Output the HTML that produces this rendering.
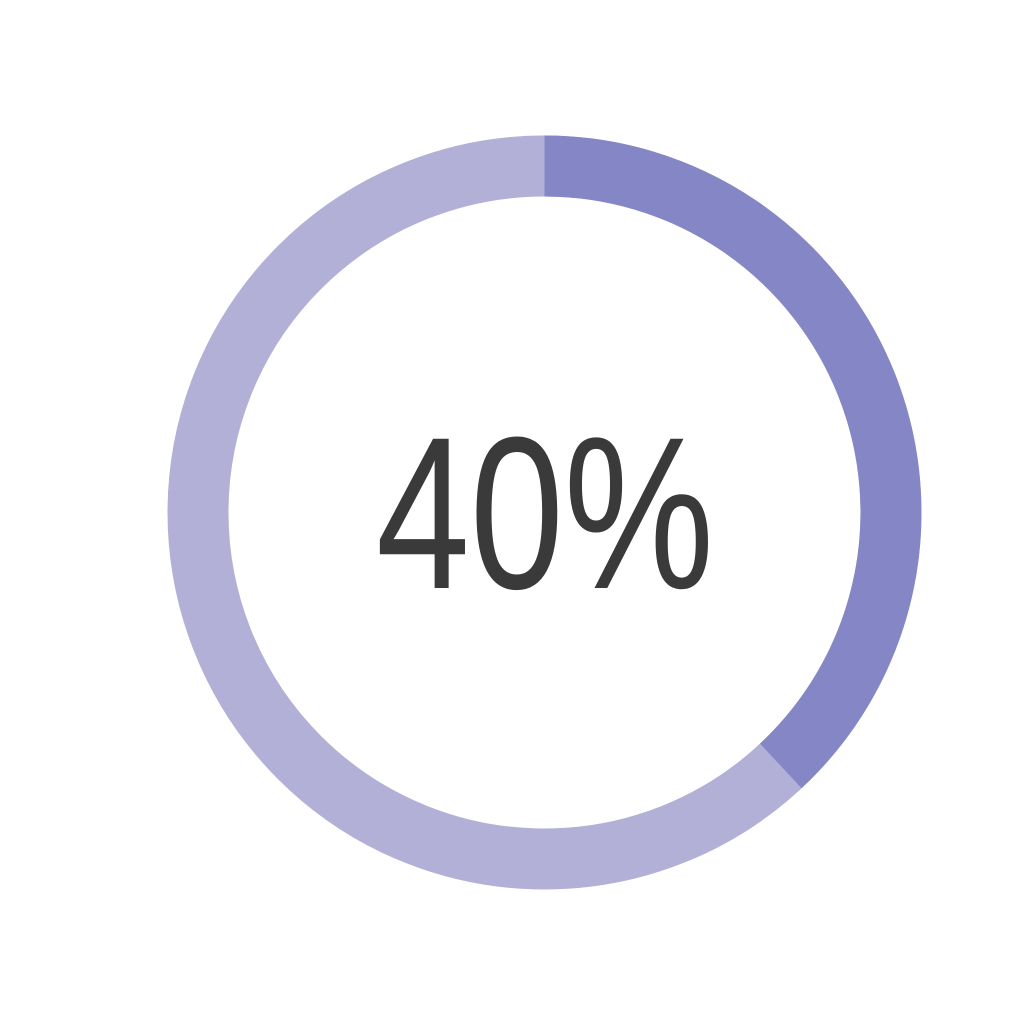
<!DOCTYPE html>
<html><head><meta charset="utf-8"><style>html,body{margin:0;padding:0;background:#fff;}</style></head>
<body>
<svg width="1024" height="1024" viewBox="0 0 1024 1024" xmlns="http://www.w3.org/2000/svg">
<circle cx="544.5" cy="512.5" r="346.5" fill="none" stroke="#b2b0d7" stroke-width="61"/>
<path d="M544.5 166 A346.5 346.5 0 0 1 780.8 765.9" fill="none" stroke="#8586c5" stroke-width="61"/>
<text x="376" y="588" font-family="Liberation Sans, sans-serif" font-size="217" fill="#3a3a3a" textLength="338" lengthAdjust="spacingAndGlyphs">40%</text>
</svg>
</body></html>
